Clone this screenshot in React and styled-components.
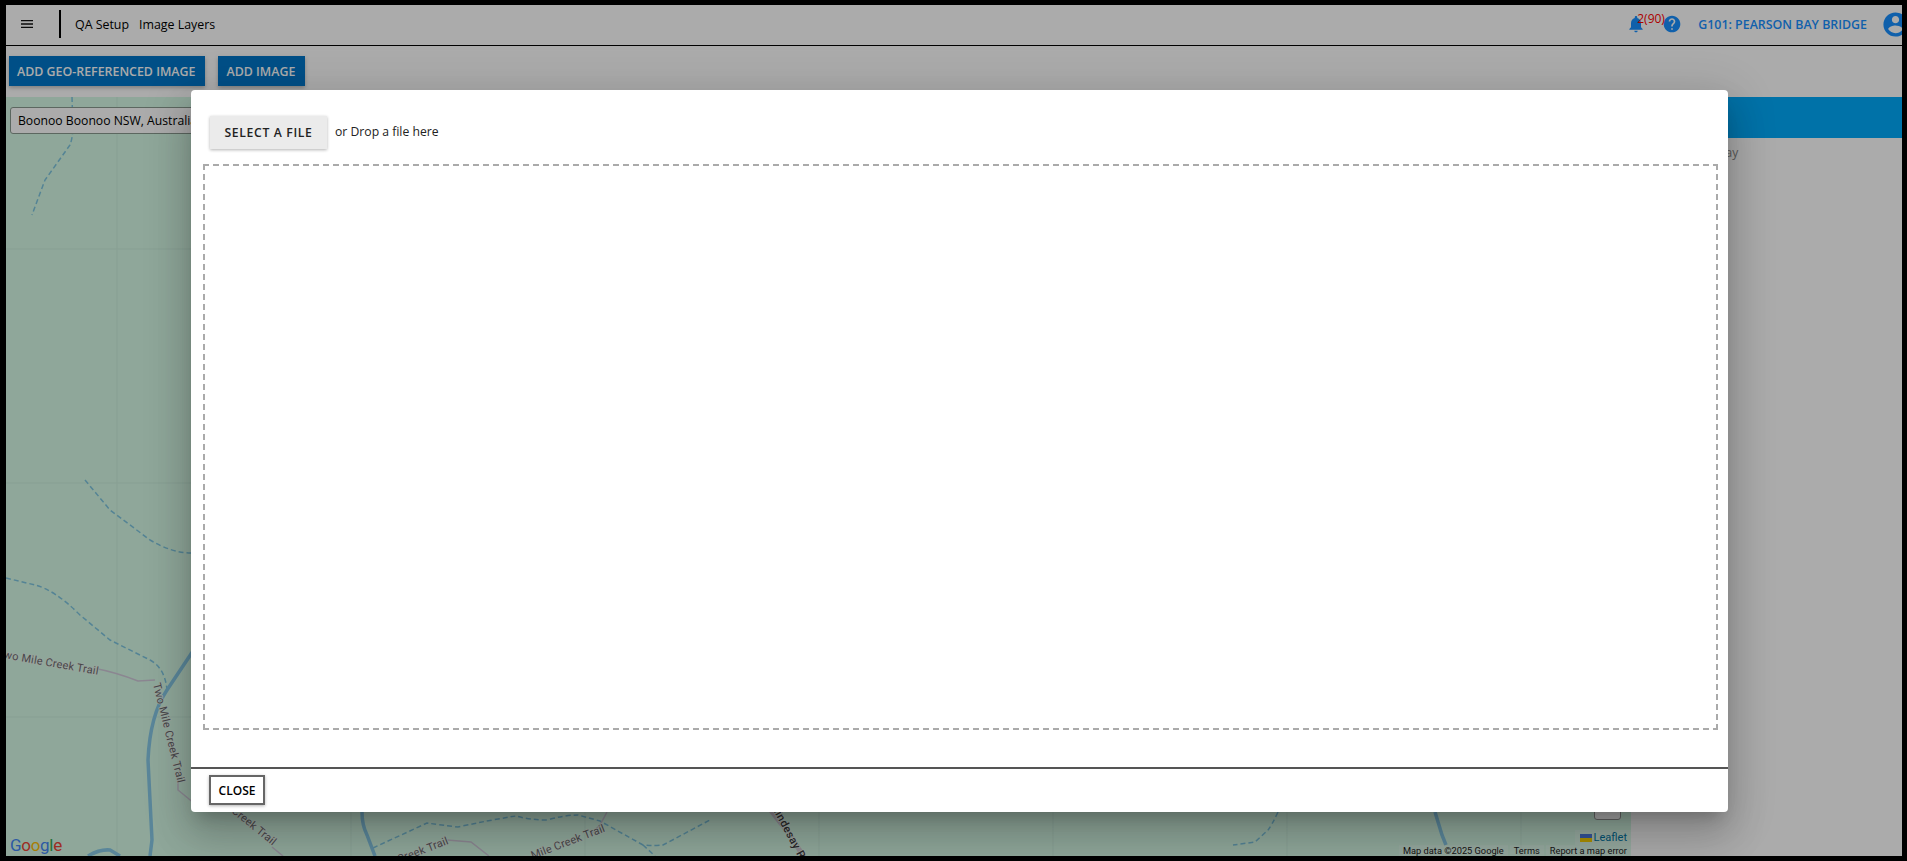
import React from "react";
import styled, { createGlobalStyle } from "styled-components";

const GlobalStyle = createGlobalStyle`
  html, body {
    margin: 0;
    padding: 0;
    height: 100%;
    overflow: hidden;
    font-family: "Open Sans", "Liberation Sans", sans-serif;
  }
`;

const Frame = styled.div`
  position: relative;
  box-sizing: border-box;
  height: 100vh;
  display: flex;
  flex-direction: column;
  overflow: hidden;
  background: #fff;
  border-style: solid;
  border-color: #000;
  border-width: 5px 5px 5px 6px;
`;

const Header = styled.header`
  flex: none;
  box-sizing: border-box;
  height: 41px;
  padding-bottom: 2px;
  display: flex;
  align-items: center;
  border-bottom: 1px solid #000;
`;

const MenuButton = styled.div`
  width: 42px;
  margin-right: 11px;
  display: flex;
  justify-content: center;
  color: #111;
`;

const HeaderDivider = styled.div`
  width: 2px;
  height: 28px;
  background: #000;
  margin-right: 14px;
`;

const Crumb = styled.span`
  font-size: 12.4px;
  color: #000;
  margin-right: 10px;
`;

const HeaderRight = styled.div`
  margin-left: auto;
  margin-right: -8px;
  display: flex;
  align-items: center;
  color: #1890ff;
`;

const BellWrap = styled.div`
  position: relative;
  display: flex;
  margin-right: 16px;
`;

const Badge = styled.span`
  position: absolute;
  left: 11px;
  top: -4px;
  font-size: 12px;
  color: #ff0000;
  white-space: nowrap;
`;

const SiteName = styled.span`
  font-size: 12.4px;
  font-weight: 600;
  color: #1890ff;
  margin: 0 14px 0 16px;
  white-space: nowrap;
`;

const Toolbar = styled.div`
  flex: none;
  height: 51px;
  display: flex;
  align-items: center;
  gap: 13px;
  padding-left: 3px;
  padding-bottom: 1px;
  box-sizing: border-box;
`;

const PrimaryButton = styled.div`
  height: 30px;
  padding: 0 10px 0 8px;
  display: flex;
  align-items: center;
  background: #0076c9;
  color: #fff;
  font-size: 12.4px;
  font-weight: 600;
  box-shadow: 0 2px 4px rgba(0, 0, 0, 0.25);
`;

const Content = styled.div`
  flex: 1;
  min-height: 0;
  display: flex;
`;

const MapArea = styled.div`
  position: relative;
  flex: none;
  width: 1625px;
  overflow: hidden;
  background: #d5fae6;
`;

const MapDrawing = styled.svg`
  display: block;
  position: absolute;
  inset: 0;
`;

const SearchBox = styled.input`
  position: absolute;
  left: 4px;
  top: 10px;
  width: 400px;
  height: 27px;
  box-sizing: border-box;
  padding: 0 7px;
  background: #fff;
  border: 1px solid #8a9a90;
  border-radius: 3px;
  font-family: "Open Sans", sans-serif;
  font-size: 12.2px;
  color: #000;
  outline: none;
`;

const GoogleLogo = styled.div`
  position: absolute;
  left: 4px;
  bottom: 0;
  font-family: "Roboto", "Liberation Sans", sans-serif;
  font-size: 17px;
  line-height: 21px;
  letter-spacing: -0.3px;
`;

const LogoLetter = styled.span`
  color: ${(p) => p.$c};
`;

const ZoomControl = styled.div`
  position: absolute;
  right: 10px;
  bottom: 36px;
  width: 27px;
  height: 60px;
  box-sizing: border-box;
  background: #fff;
  border: 1px solid #999;
  border-radius: 3px;
`;

const LeafletBox = styled.div`
  position: absolute;
  right: 0;
  bottom: 11px;
  height: 15px;
  padding: 0 4px 0 5px;
  display: flex;
  align-items: center;
  gap: 2px;
  background: rgba(255, 255, 255, 0.25);
  font-family: "Roboto", sans-serif;
  font-size: 11px;
  color: #0078a8;
`;

const GoogleNotes = styled.div`
  position: absolute;
  right: 0;
  bottom: 0;
  height: 11px;
  display: flex;
  gap: 2px;
`;

const Note = styled.span`
  padding: 0 4px;
  background: rgba(255, 255, 255, 0.25);
  font-family: "Roboto", sans-serif;
  font-size: 9.25px;
  line-height: 11px;
  color: #222;
  white-space: nowrap;
`;

const SidePanel = styled.aside`
  flex: 1;
  padding-left: 7px;
`;

const SideBar = styled.div`
  height: 41px;
  background: #00aafb;
`;

const SideText = styled.p`
  margin: 6px 0 0 20px;
  font-size: 12px;
  color: #888;
`;

const Backdrop = styled.div`
  position: absolute;
  inset: 0;
  display: flex;
  align-items: flex-start;
  padding: 85px 0 0 185px;
  background: rgba(0, 0, 0, 0.33);
`;

const Dialog = styled.div`
  width: 1537px;
  height: 722px;
  flex: none;
  display: flex;
  flex-direction: column;
  background: #fff;
  border-radius: 4px;
  box-shadow: 0 11px 15px -7px rgba(0, 0, 0, 0.2),
    0 24px 38px 3px rgba(0, 0, 0, 0.14), 0 9px 46px 8px rgba(0, 0, 0, 0.12);
`;

const UploadRow = styled.div`
  display: flex;
  align-items: center;
  gap: 8px;
  padding: 26px 0 15px 19px;
`;

const SelectButton = styled.div`
  width: 117px;
  height: 33px;
  display: flex;
  align-items: center;
  justify-content: center;
  background: #ebebeb;
  color: #222;
  font-size: 12.2px;
  font-weight: 600;
  letter-spacing: 0.65px;
  box-shadow: 0 1px 3px rgba(0, 0, 0, 0.3);
`;

const DropHint = styled.span`
  font-size: 12.2px;
  color: #222;
  margin-top: -3px;
`;

// 6px dash, 4px gap, longer than what border: dashed gives
const dash = "#aaa";
const DropZone = styled.div`
  height: 566px;
  margin: 0 10px 0 12px;
  background:
    linear-gradient(90deg, ${dash} 6px, transparent 6px) top left / 10px 2px repeat-x,
    linear-gradient(90deg, ${dash} 6px, transparent 6px) bottom left / 10px 2px repeat-x,
    linear-gradient(180deg, ${dash} 6px, transparent 6px) top left / 2px 10px repeat-y,
    linear-gradient(180deg, ${dash} 6px, transparent 6px) top right / 2px 10px repeat-y;
`;

const DialogFooter = styled.div`
  flex: 1;
  margin-top: 37px;
  padding: 6px 0 0 18px;
  border-top: 2px solid #555;
`;

const CloseButton = styled.div`
  width: 56px;
  height: 30px;
  box-sizing: border-box;
  display: flex;
  align-items: center;
  justify-content: center;
  background: #fff;
  border: 2px solid #666;
  font-size: 12px;
  font-weight: 600;
  color: #000;
  box-shadow: 0 1px 3px rgba(0, 0, 0, 0.3);
`;

const Icon = ({ d, size }) => (
  <svg width={size} height={size} viewBox="0 0 24 24" fill="currentColor">
    <path d={d} />
  </svg>
);

const menuPath = "M3 18h18v-2H3v2zm0-5h18v-2H3v2zm0-7v2h18V6H3z";
const bellPath =
  "M12 22c1.1 0 2-.9 2-2h-4c0 1.1.89 2 2 2zm6-6v-5c0-3.07-1.64-5.64-4.5-6.32V4c0-.83-.67-1.5-1.5-1.5s-1.5.67-1.5 1.5v.68C7.63 5.36 6 7.92 6 11v5l-2 2v1h16v-1l-2-2z";
const helpPath =
  "M12 2C6.48 2 2 6.48 2 12s4.48 10 10 10 10-4.48 10-10S17.52 2 12 2zm1 17h-2v-2h2v2zm2.07-7.75l-.9.92C13.45 12.9 13 13.5 13 15h-2v-.5c0-1.1.45-2.1 1.17-2.83l1.24-1.26c.37-.36.59-.86.59-1.41 0-1.1-.9-2-2-2s-2 .9-2 2H8c0-2.21 1.79-4 4-4s4 1.79 4 4c0 .88-.36 1.68-.93 2.25z";
const accountPath =
  "M12 2C6.48 2 2 6.48 2 12s4.48 10 10 10 10-4.48 10-10S17.52 2 12 2zm0 3c1.66 0 3 1.34 3 3s-1.34 3-3 3-3-1.34-3-3 1.34-3 3-3zm0 14.2c-2.5 0-4.71-1.28-6-3.22.03-1.99 4-3.08 6-3.08 1.99 0 5.97 1.09 6 3.08-1.29 1.94-3.5 3.22-6 3.22z";

// map tile seams, page coordinates
const seamsX = [117, 351, 585, 819, 1053, 1287, 1521];
const seamsY = [249, 483, 717];

const streams = [
  "M72 97 L73 130 Q72 140 70 145 L45 180 L32 215",
  "M85 480 L110 510 L150 540 Q172 553 191 553",
  "M6 578 L35 585 Q55 590 80 615 L110 640 L150 660 Q165 668 167 690",
  "M373 848 L427 823 Q440 825 458 827 Q490 820 516 816 Q530 820 547 820 Q565 815 578 815 L600 821 L643 845 Q655 846 663 845 L710 820",
  "M643 845 L655 856",
  "M1278 812 Q1272 825 1268 830 L1255 842 L1233 845",
];

const rivers = [
  "M195 648 L167 690 Q150 715 148 760 Q150 800 152 840 L150 856",
  "M88 856 Q100 849 110 850 L120 856",
  "M362 812 Q362 825 367 835 L375 856",
  "M1435 812 L1442 835 L1446 845",
];

const trails = [
  "M93 668 Q115 672 138 681 L155 680",
  "M178 778 L178 790 L195 804",
  "M272 847 L283 856",
  "M447 840 L471 842 L489 856",
  "M607 812 L600 825 L590 835",
];

const labels = [
  { text: "Two Mile Creek Trail", x: -3, y: 657, rotate: 10 },
  { text: "Two Mile Creek Trail", x: 153, y: 684, rotate: 76 },
  { text: "Creek Trail", x: 231, y: 812, rotate: 39 },
  { text: "Creek Trail", x: 399, y: 863, rotate: -21 },
  { text: "Two Mile Creek Trail", x: 510, y: 868, rotate: -21 },
];

const MapLines = () => (
  <MapDrawing width="1625" height="759" viewBox="6 97 1625 759" fill="none">
    {seamsX.map((x) => (
      <line key={x} x1={x} y1="97" x2={x} y2="856" stroke="#cbeedb" />
    ))}
    {seamsY.map((y) => (
      <line key={y} x1="6" y1={y} x2="1631" y2={y} stroke="#cbeedb" />
    ))}
    {streams.map((d) => (
      <path key={d} d={d} stroke="#7ec4de" strokeWidth="1.5" strokeDasharray="5 3" />
    ))}
    {rivers.map((d) => (
      <path key={d} d={d} stroke="#86c8e6" strokeWidth="3.5" />
    ))}
    {trails.map((d) => (
      <path key={d} d={d} stroke="#cfc8d8" strokeWidth="1.5" />
    ))}
    <path d="M755 790 L790 835 L812 870" stroke="#d0c8d2" strokeWidth="5" />
    {labels.map((l, i) => (
      <text
        key={i}
        x={l.x}
        y={l.y}
        transform={`rotate(${l.rotate} ${l.x} ${l.y})`}
        fontFamily="Roboto, sans-serif"
        fontSize="11"
        letterSpacing="0.2"
        fill="#6a6a6e"
        stroke="#e6f4ea"
        strokeWidth="1.5"
        paintOrder="stroke"
      >
        {l.text}
      </text>
    ))}
    <text
      x="772"
      y="808"
      transform="rotate(62 772 808)"
      fontFamily="Roboto, sans-serif"
      fontSize="11"
      fontWeight="500"
      letterSpacing="0.5"
      fill="#3c3c40"
      stroke="#e6f4ea"
      strokeWidth="1.5"
      paintOrder="stroke"
    >
      Lindesay Rd
    </text>
  </MapDrawing>
);

const UkraineFlag = () => (
  <svg width="12" height="8" viewBox="0 0 12 8">
    <rect width="12" height="4" fill="#4c7be1" />
    <rect y="4" width="12" height="4" fill="#ffd500" />
  </svg>
);

const App = () => {
  return (
    <>
      <GlobalStyle />
      <Frame>
        <Header>
          <MenuButton>
            <Icon d={menuPath} size={16} />
          </MenuButton>
          <HeaderDivider />
          <Crumb>QA Setup</Crumb>
          <Crumb>Image Layers</Crumb>
          <HeaderRight>
            <BellWrap>
              <Icon d={bellPath} size={20} />
              <Badge>2(90)</Badge>
            </BellWrap>
            <Icon d={helpPath} size={20} />
            <SiteName>G101: PEARSON BAY BRIDGE</SiteName>
            <Icon d={accountPath} size={29} />
          </HeaderRight>
        </Header>
        <Toolbar>
          <PrimaryButton>ADD GEO-REFERENCED IMAGE</PrimaryButton>
          <PrimaryButton>ADD IMAGE</PrimaryButton>
        </Toolbar>
        <Content>
          <MapArea>
            <MapLines />
            <SearchBox readOnly value="Boonoo Boonoo NSW, Australia" />
            <GoogleLogo>
              <LogoLetter $c="#4285f4">G</LogoLetter>
              <LogoLetter $c="#ea4335">o</LogoLetter>
              <LogoLetter $c="#fbbc05">o</LogoLetter>
              <LogoLetter $c="#4285f4">g</LogoLetter>
              <LogoLetter $c="#34a853">l</LogoLetter>
              <LogoLetter $c="#ea4335">e</LogoLetter>
            </GoogleLogo>
            <ZoomControl />
            <LeafletBox>
              <UkraineFlag />
              Leaflet
            </LeafletBox>
            <GoogleNotes>
              <Note>Map data ©2025 Google</Note>
              <Note>Terms</Note>
              <Note>Report a map error</Note>
            </GoogleNotes>
          </MapArea>
          <SidePanel>
            <SideBar />
            <SideText>Image Overlay</SideText>
          </SidePanel>
        </Content>
        <Backdrop>
          <Dialog>
            <UploadRow>
              <SelectButton>SELECT A FILE</SelectButton>
              <DropHint>or Drop a file here</DropHint>
            </UploadRow>
            <DropZone />
            <DialogFooter>
              <CloseButton>CLOSE</CloseButton>
            </DialogFooter>
          </Dialog>
        </Backdrop>
      </Frame>
    </>
  );
};

export default App;
